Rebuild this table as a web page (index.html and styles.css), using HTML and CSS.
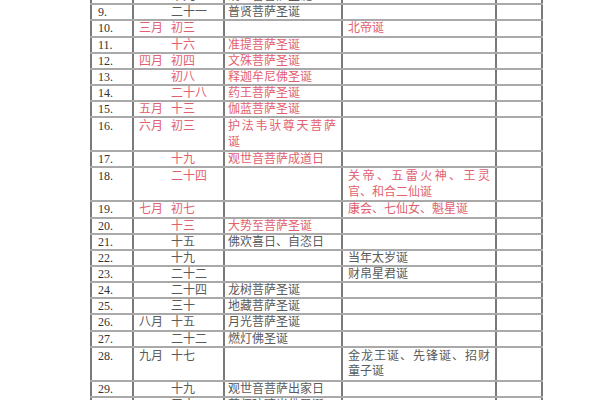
FILE: index.html
```html
<!DOCTYPE html>
<html lang="zh">
<head>
<meta charset="utf-8">
<title>佛菩萨圣诞表</title>
<link rel="stylesheet" href="styles.css">
</head>
<body>
<table class="sheet">
  <colgroup>
    <col class="c-no"><col class="c-date"><col class="c-fo"><col class="c-shen"><col class="c-note">
  </colgroup>
  <tbody>
    <tr class="r1"><td class="no">8.</td><td class="date"><span class="m"></span><span class="d">十九</span></td><td class="fo">观世音菩萨圣诞</td><td class="shen"></td><td></td></tr>
    <tr class="r1"><td class="no">9.</td><td class="date"><span class="m"></span><span class="d">二十一</span></td><td class="fo">普贤菩萨圣诞</td><td class="shen"></td><td></td></tr>
    <tr class="r1 red"><td class="no">10.</td><td class="date"><span class="m">三月</span><span class="d">初三</span></td><td class="fo"></td><td class="shen">北帝诞</td><td></td></tr>
    <tr class="r1 red"><td class="no">11.</td><td class="date"><span class="m"></span><span class="d">十六</span></td><td class="fo">准提菩萨圣诞</td><td class="shen"></td><td></td></tr>
    <tr class="r1 red"><td class="no">12.</td><td class="date"><span class="m">四月</span><span class="d">初四</span></td><td class="fo">文殊菩萨圣诞</td><td class="shen"></td><td></td></tr>
    <tr class="r1 red"><td class="no">13.</td><td class="date"><span class="m"></span><span class="d">初八</span></td><td class="fo">释迦牟尼佛圣诞</td><td class="shen"></td><td></td></tr>
    <tr class="r1 red"><td class="no">14.</td><td class="date"><span class="m"></span><span class="d">二十八</span></td><td class="fo">药王菩萨圣诞</td><td class="shen"></td><td></td></tr>
    <tr class="r1 red"><td class="no">15.</td><td class="date"><span class="m">五月</span><span class="d">十三</span></td><td class="fo">伽蓝菩萨圣诞</td><td class="shen"></td><td></td></tr>
    <tr class="r2 red"><td class="no">16.</td><td class="date"><span class="m">六月</span><span class="d">初三</span></td><td class="fo"><div class="jl">护法韦驮尊天菩萨</div>诞</td><td class="shen"></td><td></td></tr>
    <tr class="r1 red"><td class="no">17.</td><td class="date"><span class="m"></span><span class="d">十九</span></td><td class="fo">观世音菩萨成道日</td><td class="shen"></td><td></td></tr>
    <tr class="r2 red"><td class="no">18.</td><td class="date"><span class="m"></span><span class="d">二十四</span></td><td class="fo"></td><td class="shen"><div class="jl">关帝、五雷火神、王灵</div>官、和合二仙诞</td><td></td></tr>
    <tr class="r1 red"><td class="no">19.</td><td class="date"><span class="m">七月</span><span class="d">初七</span></td><td class="fo"></td><td class="shen">康会、七仙女、魁星诞</td><td></td></tr>
    <tr class="r1 red"><td class="no">20.</td><td class="date"><span class="m"></span><span class="d">十三</span></td><td class="fo">大势至菩萨圣诞</td><td class="shen"></td><td></td></tr>
    <tr class="r1"><td class="no">21.</td><td class="date"><span class="m"></span><span class="d">十五</span></td><td class="fo">佛欢喜日、自恣日</td><td class="shen"></td><td></td></tr>
    <tr class="r1"><td class="no">22.</td><td class="date"><span class="m"></span><span class="d">十九</span></td><td class="fo"></td><td class="shen">当年太岁诞</td><td></td></tr>
    <tr class="r1"><td class="no">23.</td><td class="date"><span class="m"></span><span class="d">二十二</span></td><td class="fo"></td><td class="shen">财帛星君诞</td><td></td></tr>
    <tr class="r1"><td class="no">24.</td><td class="date"><span class="m"></span><span class="d">二十四</span></td><td class="fo">龙树菩萨圣诞</td><td class="shen"></td><td></td></tr>
    <tr class="r1"><td class="no">25.</td><td class="date"><span class="m"></span><span class="d">三十</span></td><td class="fo">地藏菩萨圣诞</td><td class="shen"></td><td></td></tr>
    <tr class="r1"><td class="no">26.</td><td class="date"><span class="m">八月</span><span class="d">十五</span></td><td class="fo">月光菩萨圣诞</td><td class="shen"></td><td></td></tr>
    <tr class="r1"><td class="no">27.</td><td class="date"><span class="m"></span><span class="d">二十二</span></td><td class="fo">燃灯佛圣诞</td><td class="shen"></td><td></td></tr>
    <tr class="r2"><td class="no">28.</td><td class="date"><span class="m">九月</span><span class="d">十七</span></td><td class="fo"></td><td class="shen"><div class="jl">金龙王诞、先锋诞、招财</div>童子诞</td><td></td></tr>
    <tr class="r1"><td class="no">29.</td><td class="date"><span class="m"></span><span class="d">十九</span></td><td class="fo">观世音菩萨出家日</td><td class="shen"></td><td></td></tr>
    <tr class="r1"><td class="no">30.</td><td class="date"><span class="m"></span><span class="d">三十</span></td><td class="fo">药师琉璃光佛圣诞</td><td class="shen"></td><td></td></tr>
  </tbody>
</table>
</body>
</html>
```
FILE: styles.css
```css
html, body {
  margin: 0;
  padding: 0;
  background: #ffffff;
}

.sheet {
  margin: -12.85px 0 0 90px;
  width: 451px;
  border-collapse: collapse;
  table-layout: fixed;
  font-family: "Liberation Serif", "Noto Sans CJK SC", serif;
  font-size: 12px;
  color: #5a5a5a;
}

.c-no { width: 42px; }
.c-date { width: 91px; }
.c-fo { width: 118px; }
.c-shen { width: 154px; }
.c-note { width: 46px; }

.sheet td {
  padding: 1px 0 0 0;
  border-top: 2px solid #a9a9a9;
  border-bottom: 2px solid #a9a9a9;
  border-left: 2px solid #7a7a7a;
  border-right: 2px solid #7a7a7a;
  vertical-align: top;
  line-height: 13px;
  white-space: nowrap;
  overflow: hidden;
}

.r1 { height: 16.15px; }
.r2 { height: 32.3px; }

.r2 td {
  line-height: 15.5px;
}

.sheet td.no {
  padding-left: 6px;
  color: #333333;
}

.sheet td.date {
  padding-left: 5px;
}

.m {
  display: inline-block;
  width: 32px;
}

.sheet td.fo {
  padding-left: 3px;
  padding-right: 5px;
}

.sheet td.shen {
  padding-left: 5px;
  padding-right: 5px;
}

.jl {
  text-align: justify;
  text-align-last: justify;
}

.red td.date,
.red td.fo,
.red td.shen {
  color: #e25f70;
}
```
